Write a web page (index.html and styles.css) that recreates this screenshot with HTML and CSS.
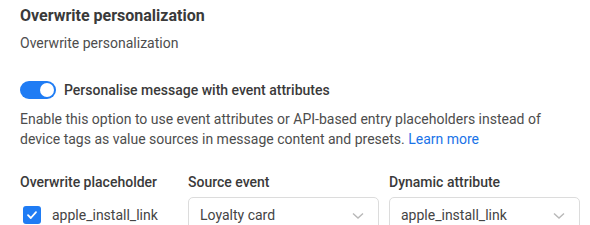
FILE: index.html
```html
<!DOCTYPE html>
<html lang="en">
<head>
  <meta charset="UTF-8">
  <title>Overwrite personalization</title>
  <link rel="stylesheet" href="styles.css">
</head>
<body>

<div class="section">
  <h3 class="title">Overwrite personalization</h3>
  <div class="subtitle">Overwrite personalization</div>

  <label class="toggle-row">
    <span class="toggle"><span class="knob"></span></span>
    <span class="toggle-label">Personalise message with event attributes</span>
  </label>

  <p class="hint">
    Enable this option to use event attributes or API-based entry placeholders instead of
    device tags as value sources in message content and presets. <a href="#">Learn more</a>
  </p>

  <div class="mapping">
    <div class="col-head">Overwrite placeholder</div>
    <div class="col-head">Source event</div>
    <div class="col-head">Dynamic attribute</div>

    <label class="check-row">
      <span class="checkbox">
        <svg width="12" height="12" viewBox="0 0 12 12"><path d="M2 6.2 L4.8 9 L10 3.2" fill="none" stroke="#fff" stroke-width="1.8" stroke-linecap="round" stroke-linejoin="round"/></svg>
      </span>
      <span>apple_install_link</span>
    </label>
    <div class="select">
      <span>Loyalty card</span>
      <svg class="chevron" width="12" height="8" viewBox="0 0 12 8"><path d="M1 1.5 L6 6 L11 1.5" fill="none" stroke="#b8b8b8" stroke-width="1.4"/></svg>
    </div>
    <div class="select">
      <span>apple_install_link</span>
      <svg class="chevron" width="12" height="8" viewBox="0 0 12 8"><path d="M1 1.5 L6 6 L11 1.5" fill="none" stroke="#b8b8b8" stroke-width="1.4"/></svg>
    </div>
  </div>
</div>

</body>
</html>
```

FILE: styles.css
```css
body {
  margin: 0;
  background: #fff;
  font-family: Roboto, "Liberation Sans", sans-serif;
  color: #444;
}

.section {
  padding: 6px 20px 0 20px;
}

.title {
  margin: 0;
  font-size: 16px;
  line-height: 20px;
  font-weight: 700;
  color: #3a3a3a;
}

.subtitle {
  margin-top: 7px;
  font-size: 14px;
  line-height: 20px;
  color: #4d4d4d;
}

.toggle-row {
  display: flex;
  align-items: center;
  gap: 8px;
  margin-top: 27px;
  height: 20px;
}

.toggle {
  display: flex;
  align-items: center;
  justify-content: flex-end;
  width: 36px;
  height: 18px;
  border-radius: 9px;
  background: #1f7cf4;
  padding: 0 2px;
  box-sizing: border-box;
}

.knob {
  width: 14px;
  height: 14px;
  border-radius: 50%;
  background: #fff;
}

.toggle-label {
  font-size: 14px;
  line-height: 20px;
  font-weight: 500;
  color: #3a3a3a;
}

.hint {
  margin: 9px 0 0 0;
  font-size: 14px;
  line-height: 20px;
  color: #4d4d4d;
}

.hint a {
  color: #1a73e8;
  text-decoration: none;
}

.mapping {
  display: grid;
  grid-template-columns: 158px 191px 191px;
  column-gap: 10px;
  row-gap: 5px;
  margin-top: 23px;
}

.col-head {
  font-size: 14px;
  line-height: 20px;
  font-weight: 500;
  color: #3a3a3a;
}

.check-row {
  display: flex;
  align-items: center;
  gap: 11px;
  padding-left: 3px;
  font-size: 14px;
  color: #444;
}

.checkbox {
  display: flex;
  align-items: center;
  justify-content: center;
  width: 18px;
  height: 18px;
  border-radius: 3px;
  background: #1f7cf4;
}

.select {
  display: flex;
  align-items: center;
  justify-content: space-between;
  height: 36px;
  box-sizing: border-box;
  border: 1px solid #dcdcdc;
  border-radius: 5px;
  padding: 0 14px 0 11px;
  font-size: 14px;
  color: #444;
}

.chevron {
  margin-top: 2px;
}
```
